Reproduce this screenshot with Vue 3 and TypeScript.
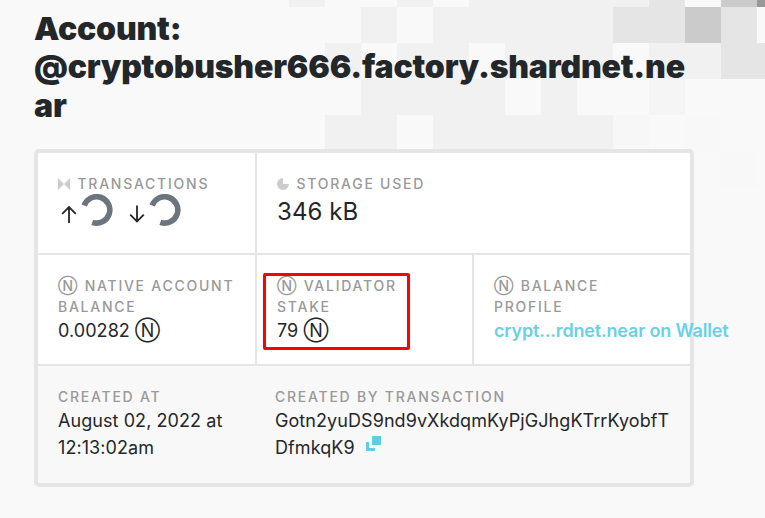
<script setup lang="ts">
interface Tile {
  x: number
  y: number
  w: number
  fill: string
}

const CELL = 36
const ORIGIN_X = 289
const ORIGIN_Y = -29

// column, row, span in cells, fill
const runs: [number, number, number, string][] = [
  [0, 0, 1, '#f1f1f1'], [3, 0, 1, '#f1f1f1'], [5, 0, 5, '#f1f1f1'], [10, 0, 1, '#e5e5e5'],
  [12, 0, 1, '#cbcbcb'], [13, 0, 1, '#999999'],
  [2, 1, 1, '#f1f1f1'], [4, 1, 5, '#f1f1f1'], [9, 1, 2, '#e5e5e5'], [11, 1, 1, '#cbcbcb'],
  [12, 1, 1, '#e5e5e5'],
  [1, 2, 1, '#f1f1f1'], [3, 2, 2, '#f1f1f1'], [6, 2, 3, '#f1f1f1'], [10, 2, 2, '#f1f1f1'],
  [12, 2, 2, '#e5e5e5'],
  [2, 3, 4, '#f1f1f1'], [7, 3, 1, '#f1f1f1'], [10, 3, 1, '#f5f5f5'],
  [1, 4, 2, '#f1f1f1'], [4, 4, 5, '#f1f1f1'], [9, 4, 1, '#f7f7f7'], [11, 4, 1, '#f8f8f8'],
  [12, 5, 1, '#f8f8f8'],
]

const tiles: Tile[] = runs.map(([c, r, n, fill]) => ({
  x: ORIGIN_X + c * CELL,
  y: ORIGIN_Y + r * CELL,
  w: n * CELL,
  fill,
}))

const account = 'cryptobusher666.factory.shardnet.near'
const balances = [
  { label: 'Native Account Balance', value: '0.00282', marked: false },
  { label: 'Validator Stake', value: '79', marked: true },
]
</script>

<template>
  <main class="page">
    <svg class="mosaic" width="765" height="260" shape-rendering="crispEdges" aria-hidden="true">
      <rect v-for="(t, i) in tiles" :key="i" :x="t.x" :y="t.y" :width="t.w" :height="36" :fill="t.fill" />
    </svg>

    <h1 class="title">Account: @{{ account }}</h1>

    <section class="card">
      <div class="row row-top">
        <div class="cell">
          <div class="label">
            <svg class="mini" width="12" height="12" viewBox="0 0 12 12"><path d="M0 0L6 6L0 12ZM12 0L6 6L12 12Z" fill="#ccc" /></svg>
            Transactions
          </div>
          <div class="counts">
            <svg class="arrow" width="16" height="18" viewBox="0 0 16 18"><path d="M8 18V1.5M1.2 8.8L8 2L14.8 8.8" /></svg>
            <svg class="spinner" width="32" height="32" viewBox="0 0 32 32"><path d="M3.2 11.5A13.2 13.2 0 1 1 11.3 28.4" /></svg>
            <svg class="arrow down" width="16" height="18" viewBox="0 0 16 18"><path d="M8 .5V16.5M1.2 9.7L8 16.5L14.8 9.7" /></svg>
            <svg class="spinner" width="32" height="32" viewBox="0 0 32 32"><path d="M3.2 11.5A13.2 13.2 0 1 1 11.3 28.4" /></svg>
          </div>
        </div>
        <div class="cell wide">
          <div class="label">
            <svg class="mini" width="12" height="12" viewBox="0 0 12 12"><path d="M6 0A6 6 0 1 0 12 6H6Z" fill="#ccc" /></svg>
            Storage Used
          </div>
          <div class="value big">346 kB</div>
        </div>
      </div>

      <div class="row row-mid">
        <div v-for="b in balances" :key="b.label" class="cell">
          <div class="label">Ⓝ {{ b.label }}</div>
          <div class="value">{{ b.value }} Ⓝ</div>
          <span v-if="b.marked" class="marker"></span>
        </div>
        <div class="cell">
          <div class="label">Ⓝ Balance Profile</div>
          <a class="wallet">crypt...rdnet.near on Wallet</a>
        </div>
      </div>

      <div class="row row-foot">
        <div class="cell">
          <div class="label">Created At</div>
          <div class="value">August 02, 2022 at 12:13:02am</div>
        </div>
        <div class="cell wide">
          <div class="label">Created By Transaction</div>
          <div class="value hash">
            Gotn2yuDS9nd9vXkdqmKyPjGJhgKTrrKyobfTDfmkqK9
            <svg class="copy" width="15" height="15" viewBox="0 0 15 15" shape-rendering="crispEdges"><path d="M6 0H15V9H6ZM0 6H3V12H9V15H0Z" fill="#61cce2" /></svg>
          </div>
        </div>
      </div>
    </section>
  </main>
</template>

<style>
body {
  margin: 0;
  background: #f9f9f9;
}
</style>

<style scoped>
.page {
  position: relative;
  box-sizing: border-box;
  width: 765px;
  height: 518px;
  padding: 10px 71px 0 34px;
  overflow: hidden;
  background: #f9f9f9;
  color: #24272a;
  font-family: Inter, sans-serif;
}
.mosaic {
  position: absolute;
  top: 0;
  left: 0;
}
.title {
  position: relative;
  margin: 0 0 24px;
  height: 115px;
  font-size: 32px;
  font-weight: 900;
  line-height: 38.4px;
  letter-spacing: -0.19px;
  word-break: break-word;
}
.card {
  position: relative;
  box-sizing: border-box;
  width: 660px;
  height: 338px;
  border: 4px solid #e5e5e5;
  border-radius: 5px;
  background: #fff;
}
.row {
  display: grid;
  grid-template-columns: 217px 217px minmax(0, 1fr);
  box-sizing: border-box;
}
.row-top {
  height: 102px;
  border-bottom: 2px solid #e5e5e5;
}
.row-mid {
  height: 111px;
  border-bottom: 2px solid #e5e5e5;
}
.row-foot {
  height: 117px;
  background: #f8f8f8;
}
.cell {
  position: relative;
  padding: 20px 18px 0 20px;
}
.cell + .cell {
  border-left: 2px solid #e5e5e5;
}
.row-foot .cell + .cell {
  border-left: 0;
}
.wide {
  grid-column: span 2;
}
.label {
  color: #999;
  font-size: 14px;
  font-weight: 500;
  line-height: 21px;
  letter-spacing: 1.75px;
  text-transform: uppercase;
}
.mini {
  margin-right: 2px;
  vertical-align: -1px;
}
.value {
  font-size: 18px;
  line-height: 27px;
  letter-spacing: 0.07px;
}
.value.big {
  font-size: 24px;
  line-height: 36px;
}
.hash {
  word-break: break-all;
}
.copy {
  margin-left: 6px;
  vertical-align: 3px;
}
.wallet {
  color: #6ad1e3;
  font-size: 18px;
  font-weight: 600;
  line-height: 27px;
  letter-spacing: -0.18px;
  white-space: nowrap;
}
.counts {
  display: flex;
  align-items: flex-start;
  padding-left: 3px;
}
.arrow {
  margin-top: 11px;
  fill: none;
  stroke: #24272a;
  stroke-width: 1.8;
}
.arrow.down {
  margin-left: 16px;
}
.spinner {
  margin-left: 4px;
  fill: none;
  stroke: #6c757d;
  stroke-width: 5.6;
}
.marker {
  position: absolute;
  top: 18px;
  left: 6px;
  box-sizing: border-box;
  width: 147px;
  height: 77px;
  border: 3px solid #f00;
  border-radius: 2px;
}
</style>
